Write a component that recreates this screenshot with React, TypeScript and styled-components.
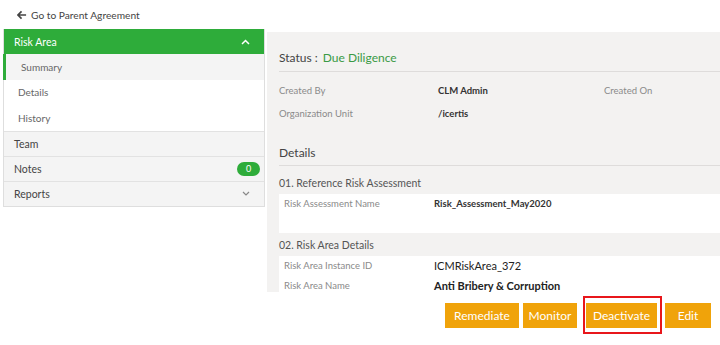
import { FC } from "react";
import styled, { createGlobalStyle } from "styled-components";

const GlobalStyle = createGlobalStyle`
  html, body {
    margin: 0;
    padding: 0;
    background: #ffffff;
    font-family: Lato, "Open Sans", Arial, sans-serif;
    overflow: hidden;
  }
`;

const navItems = [
  { label: "Team" },
  { label: "Notes", badge: "0" },
  { label: "Reports", chevron: true },
];

const App: FC = () => {
  return (
    <Page>
      <GlobalStyle />
      <BackLink>
        <svg width="10" height="10" viewBox="0 0 11 10">
          <path d="M5 1 L1 5 L5 9 M1 5 H10" stroke="#444" strokeWidth="1.8" fill="none" />
        </svg>
        Go to Parent Agreement
      </BackLink>
      <Body>
        <Sidebar>
          <GroupHeader>
            Risk Area
            <svg width="9" height="6" viewBox="0 0 9 6">
              <path d="M1 5 L4.5 1.5 L8 5" stroke="#fff" strokeWidth="1.5" fill="none" />
            </svg>
          </GroupHeader>
          <SubItem active>Summary</SubItem>
          <SubItem>Details</SubItem>
          <SubItem>History</SubItem>
          {navItems.map((n) => (
            <NavItem key={n.label}>
              {n.label}
              {n.badge && <Badge>{n.badge}</Badge>}
              {n.chevron && (
                <svg width="8" height="5" viewBox="0 0 8 5">
                  <path d="M1 1 L4 4 L7 1" stroke="#888" strokeWidth="1.2" fill="none" />
                </svg>
              )}
            </NavItem>
          ))}
        </Sidebar>
        <Main>
          <StatusRow>
            Status : <StatusValue>Due Diligence</StatusValue>
          </StatusRow>
          <InfoGrid>
            <Label>Created By</Label>
            <Value>CLM Admin</Value>
            <Label>Created On</Label>
            <Label>Organization Unit</Label>
            <Value>/icertis</Value>
            <span />
          </InfoGrid>
          <SectionTitle>Details</SectionTitle>
          <SubTitle>01. Reference Risk Assessment</SubTitle>
          <Card tall>
            <CardRow>
              <Label>Risk Assessment Name</Label>
              <Value>Risk_Assessment_May2020</Value>
            </CardRow>
          </Card>
          <SubTitle>02. Risk Area Details</SubTitle>
          <Card>
            <CardRow>
              <Label>Risk Area Instance ID</Label>
              <BigValue>ICMRiskArea_372</BigValue>
            </CardRow>
            <CardRow>
              <Label>Risk Area Name</Label>
              <BigValue bold>Anti Bribery &amp; Corruption</BigValue>
            </CardRow>
          </Card>
        </Main>
      </Body>
      <Actions>
        <ActionButton w={74}>Remediate</ActionButton>
        <ActionButton w={54}>Monitor</ActionButton>
        <Highlight>
          <ActionButton w={71}>Deactivate</ActionButton>
        </Highlight>
        <ActionButton w={46}>Edit</ActionButton>
      </Actions>
    </Page>
  );
};

export default App;

const Page = styled.div({
  width: "720px",
  height: "345px",
  boxSizing: "border-box",
  padding: "0 0 0 3px",
  display: "flex",
  flexDirection: "column",
});
const BackLink = styled.div({
  height: "29px",
  display: "flex",
  alignItems: "center",
  gap: "4px",
  paddingLeft: "14px",
  fontSize: "10.2px",
  color: "#444",
});
const Body = styled.div({
  display: "flex",
  alignItems: "flex-start",
  gap: "2px",
});
const Sidebar = styled.div({
  width: "262px",
  flexShrink: 0,
  border: "1px solid #dedede",
  borderTop: "none",
  boxSizing: "border-box",
  display: "flex",
  flexDirection: "column",
});
const GroupHeader = styled.div({
  height: "25px",
  background: "#2eac3a",
  color: "#fff",
  fontSize: "10.5px",
  display: "flex",
  alignItems: "center",
  justifyContent: "space-between",
  padding: "0 14px 0 10px",
});
const SubItem = styled.div<{ active?: boolean }>(({ active }) => ({
  height: "25.5px",
  display: "flex",
  alignItems: "center",
  fontSize: "10px",
  color: "#666",
  paddingLeft: active ? "15px" : "14px",
  background: active ? "#f4f4f4" : "#fff",
  borderLeft: active ? "3px solid #2eac3a" : "none",
  marginLeft: active ? "-1px" : "0",
}));
const NavItem = styled.div({
  height: "24px",
  display: "flex",
  alignItems: "center",
  justifyContent: "space-between",
  padding: "0 10px",
  fontSize: "10.5px",
  color: "#444",
  background: "#f4f4f4",
  borderTop: "1px solid #e2e2e2",
  "& > svg": { marginRight: "4px" },
});
const Badge = styled.span({
  background: "#2eac3a",
  color: "#fff",
  borderRadius: "8px",
  width: "23px",
  height: "14px",
  fontSize: "9px",
  display: "flex",
  alignItems: "center",
  justifyContent: "center",
  marginRight: "-6px",
});
const Main = styled.div({
  flex: 1,
  marginTop: "3px",
  height: "260px",
  background: "#f3f2f1",
  padding: "18px 0 0 12px",
  boxSizing: "border-box",
  overflow: "hidden",
});
const StatusRow = styled.div({
  fontSize: "12px",
  color: "#444",
  paddingBottom: "6px",
  borderBottom: "1px solid #dedcdb",
});
const StatusValue = styled.span({
  color: "#3a9a45",
  marginLeft: "2px",
});
const InfoGrid = styled.div({
  display: "grid",
  gridTemplateColumns: "159px 166px 1fr",
  rowGap: "9px",
  padding: "12px 0 24px",
});
const Label = styled.span({
  fontSize: "9.5px",
  color: "#8a8a8a",
  lineHeight: "14px",
});
const Value = styled.span({
  fontSize: "9.5px",
  fontWeight: 700,
  color: "#333",
  lineHeight: "14px",
});
const BigValue = styled.span<{ bold?: boolean }>(({ bold }) => ({
  fontSize: "11px",
  fontWeight: bold ? 700 : 400,
  color: "#222",
  lineHeight: "14px",
}));
const SectionTitle = styled.div({
  fontSize: "12px",
  color: "#444",
  paddingBottom: "5px",
  marginBottom: "5px",
  borderBottom: "1px solid #dedcdb",
});
const SubTitle = styled.div({
  fontSize: "10.5px",
  color: "#555",
  padding: "6px 0 5px",
});
const Card = styled.div<{ tall?: boolean }>(({ tall }) => ({
  background: "#fff",
  height: tall ? "39px" : "auto",
  padding: "3px 0 4px 5px",
  boxSizing: "border-box",
  display: "flex",
  flexDirection: "column",
  gap: "6px",
}));
const CardRow = styled.div({
  display: "grid",
  gridTemplateColumns: "150px 1fr",
  alignItems: "center",
});
const Actions = styled.div({
  display: "flex",
  justifyContent: "flex-end",
  alignItems: "center",
  gap: "4px",
  padding: "4px 9px 0 0",
});
const ActionButton = styled.button<{ w: number }>(({ w }) => ({
  background: "#f0a30a",
  color: "#fff",
  border: "none",
  height: "25px",
  width: `${w}px`,
  padding: 0,
  fontFamily: "inherit",
  fontSize: "12px",
}));
const Highlight = styled.div({
  border: "2px solid #e8161b",
  padding: "5px 3px 4px 1px",
  margin: "0 -1px 0 2px",
});
